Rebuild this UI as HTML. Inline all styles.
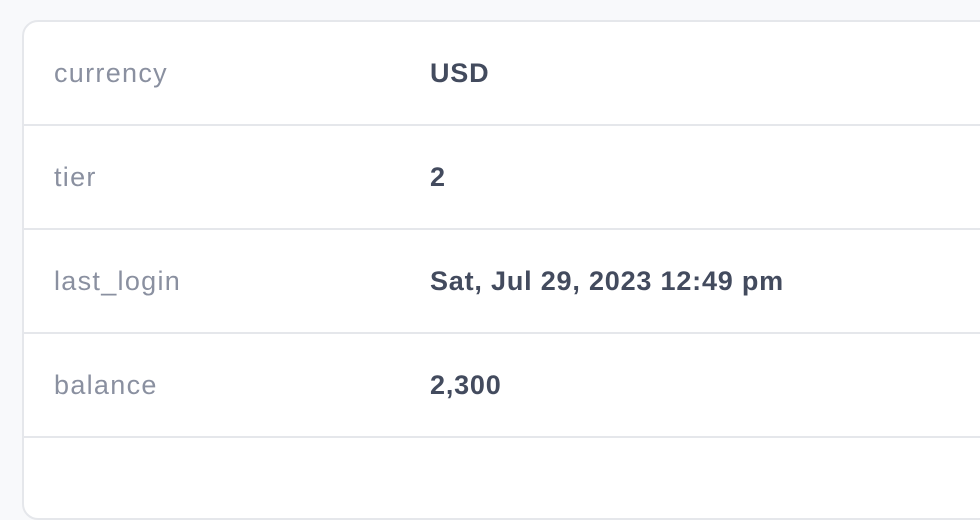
<!DOCTYPE html>
<html><head><meta charset="utf-8"><style>
html,body{margin:0;padding:0;width:980px;height:428px;overflow:hidden;background:#f8f9fb;font-family:"Liberation Sans",Arial,sans-serif;}
.card{position:absolute;left:22px;top:20px;width:1000px;height:500px;background:#fff;border:2px solid #e5e7eb;border-radius:16px;box-sizing:border-box;overflow:hidden;}
.row{position:absolute;left:0;width:100%;height:104px;border-bottom:2px solid #e5e7eb;box-sizing:border-box;}
.k{position:absolute;left:30px;top:36px;font-size:27px;letter-spacing:1.3px;color:#8a90a0;line-height:30px;}
.v{position:absolute;left:406px;top:36px;font-size:27px;letter-spacing:0.8px;color:#434b5e;font-weight:bold;line-height:30px;}
</style></head><body>
<div class="card">
<div class="row" style="top:0"><div class="k">currency</div><div class="v">USD</div></div>
<div class="row" style="top:104px"><div class="k">tier</div><div class="v">2</div></div>
<div class="row" style="top:208px"><div class="k">last_login</div><div class="v">Sat, Jul 29, 2023 12:49 pm</div></div>
<div class="row" style="top:312px"><div class="k">balance</div><div class="v">2,300</div></div>
</div>
</body></html>
